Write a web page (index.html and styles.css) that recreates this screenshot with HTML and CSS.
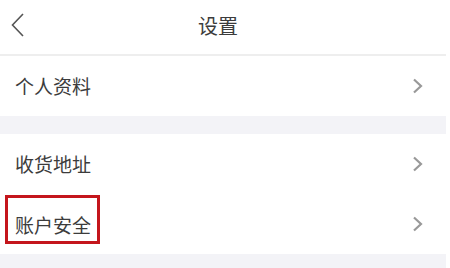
FILE: index.html
```html
<!DOCTYPE html>
<html lang="zh-CN">
<head>
    <meta charset="UTF-8">
    <title>设置</title>
    <link rel="stylesheet" href="styles.css">
</head>
<body>
    <div class="page">
        <div class="header">
            <span class="btn-back">
                <svg width="16" height="24" viewBox="0 0 16 24"><path d="M13 1 L2.5 12 L13 23" fill="none" stroke="#555" stroke-width="1.6"/></svg>
            </span>
            <h1>设置</h1>
        </div>

        <div class="list">
            <div class="list-item">
                <span class="label">个人资料</span>
                <svg class="arrow" width="12" height="16" viewBox="0 0 12 16"><path d="M2 1.5 L9 8 L2 14.5" fill="none" stroke="#999" stroke-width="2.2"/></svg>
            </div>
        </div>

        <div class="gap"></div>

        <div class="list">
            <div class="list-item">
                <span class="label">收货地址</span>
                <svg class="arrow" width="12" height="16" viewBox="0 0 12 16"><path d="M2 1.5 L9 8 L2 14.5" fill="none" stroke="#999" stroke-width="2.2"/></svg>
            </div>
            <div class="list-item">
                <span class="label highlight">账户安全</span>
                <svg class="arrow" width="12" height="16" viewBox="0 0 12 16"><path d="M2 1.5 L9 8 L2 14.5" fill="none" stroke="#999" stroke-width="2.2"/></svg>
            </div>
        </div>

        <div class="gap"></div>
    </div>
</body>
</html>
```

FILE: styles.css
```css
body {
    margin: 0;
    background-color: #fff;
    font-family: "Noto Sans CJK SC", "Noto Sans", sans-serif;
    color: #3c3c3c;
}

.page {
    width: 446px;
}

.header {
    position: relative;
    height: 56px;
    box-sizing: border-box;
    padding: 0 10px 3px 0;
    border-bottom: 2px solid #eeeeee;
    display: flex;
    align-items: center;
    justify-content: center;
}

.header h1 {
    margin: 0;
    font-size: 20px;
    font-weight: normal;
    color: #3c3c3c;
}

.btn-back {
    position: absolute;
    left: 10px;
    top: 13px;
    display: flex;
}

.list-item {
    height: 60px;
    display: flex;
    align-items: center;
    justify-content: space-between;
    padding: 0 22px 0 15px;
}

.label {
    font-size: 19px;
    line-height: 22px;
}

.label.highlight {
    margin-left: -10px;
    margin-top: -9px;
    padding: 16px 6px 5px 7px;
    border: 3px solid #c4161c;
}

.arrow {
    display: block;
}

.gap {
    height: 18px;
    background-color: #f3f3f7;
}

.gap:last-child {
    height: 14px;
}
```
